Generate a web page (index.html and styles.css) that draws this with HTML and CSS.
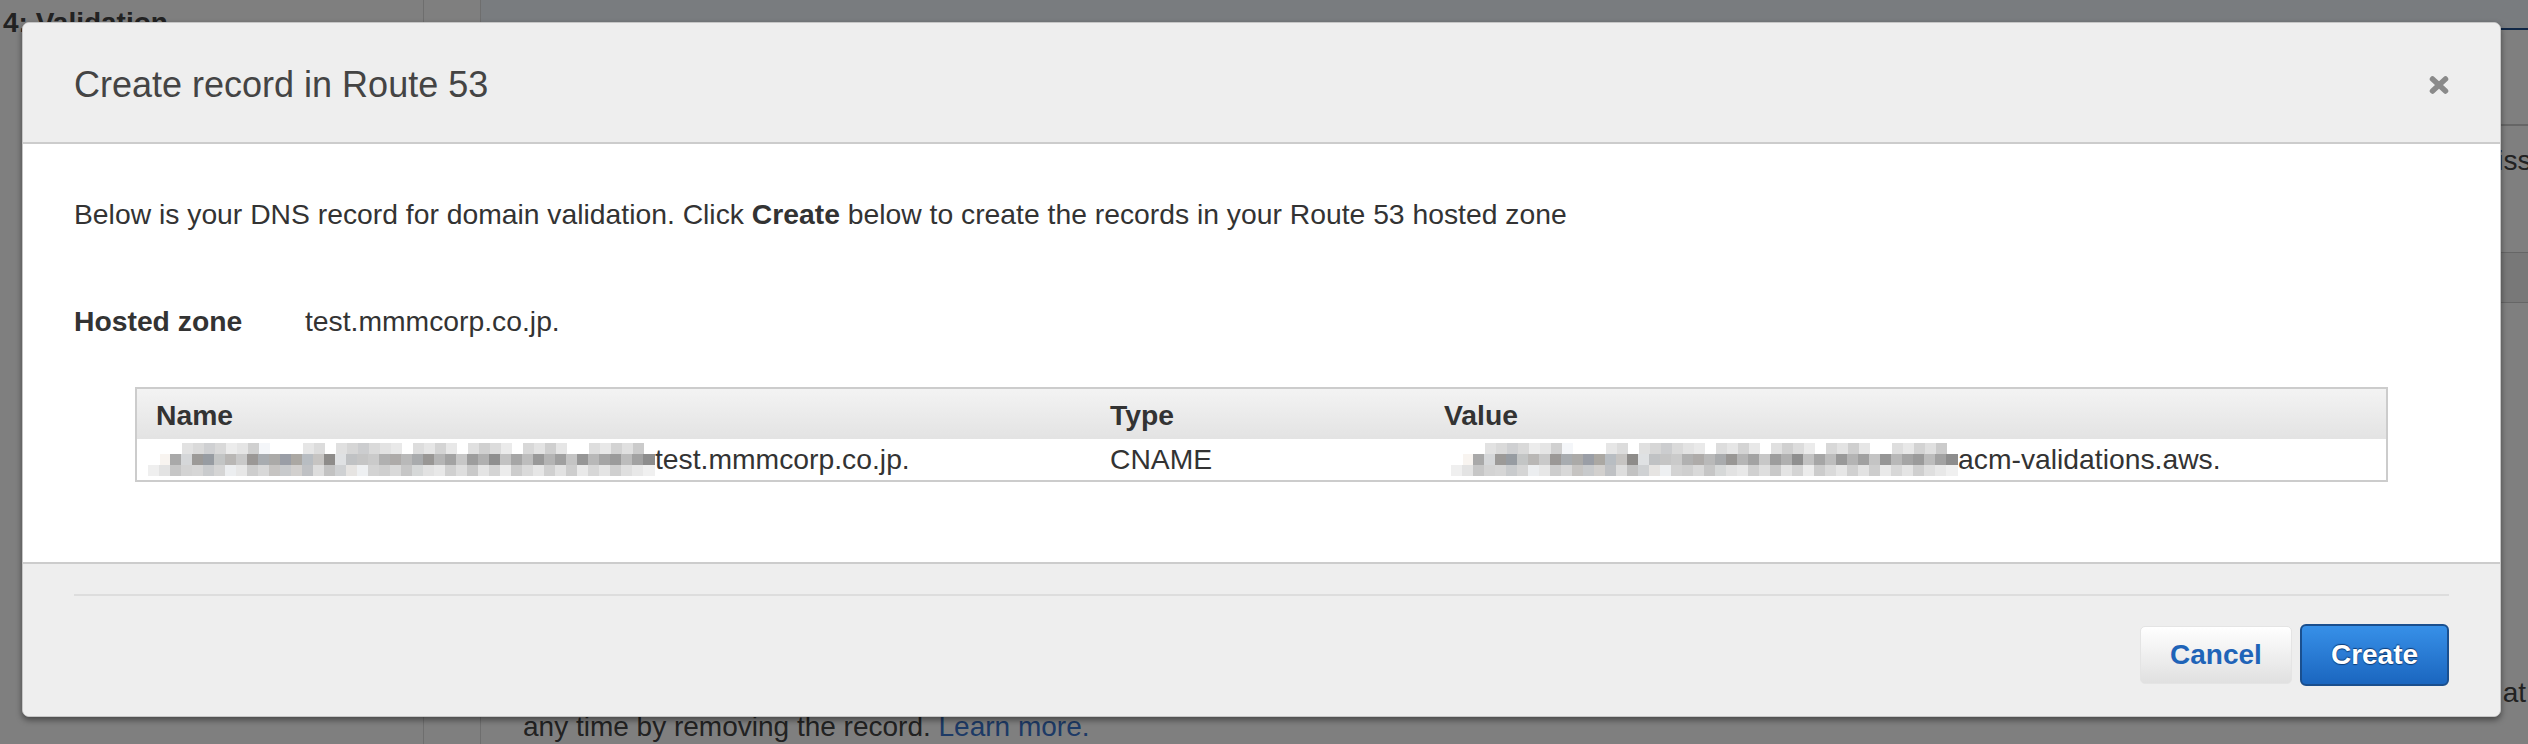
FILE: index.html
```html
<!DOCTYPE html>
<html lang="en">
<head>
<meta charset="utf-8">
<title>Create record in Route 53</title>
<link rel="stylesheet" href="styles.css">
</head>
<body>
<div class="page">
  <aside class="sidebar">
    <h2 class="step-title">4: Validation</h2>
  </aside>
  <div class="rail"></div>
  <main class="main">
    <div class="topbar"></div>
    <div class="bg-rule"></div>
    <p class="bg-line bg-issued">Once the record has been added and the domain is validated, the certificate is issued.</p>
    <div class="bg-band"></div>
    <p class="bg-note">
      <span class="note-l1">Changing the DNS configuration allows ACM to issue certificates for this domain name for as long as the DNS record exists. You can revoke permission at</span>
      <span class="note-l2">any time by removing the record. <a class="bg-link" href="#">Learn more.</a></span>
    </p>
  </main>
</div>
<div class="backdrop"></div>

<div class="modal" role="dialog" aria-labelledby="modal-title">
  <header class="modal-header">
    <h1 id="modal-title" class="modal-title">Create record in Route 53</h1>
    <button class="close-btn" aria-label="Close">
      <svg width="22" height="20" viewBox="0 0 22 20"><path d="M4.5 4 L17.5 16 M17.5 4 L4.5 16" stroke="#8a8a8a" stroke-width="5.5" stroke-linecap="round" fill="none"/></svg>
    </button>
  </header>
  <section class="modal-body">
    <p class="lead">Below is your DNS record for domain validation. Click <b>Create</b> below to create the records in your Route 53 hosted zone</p>
    <div class="zone-row">
      <span class="zone-label">Hosted zone</span>
      <span class="zone-value">test.mmmcorp.co.jp.</span>
    </div>
    <div class="record-table">
      <div class="th">Name</div>
      <div class="th">Type</div>
      <div class="th">Value</div>
      <div class="td"><span class="mosaic mosaic-name"><i class="m1"></i><i class="m2"></i><i class="m3"></i></span>test.mmmcorp.co.jp.</div>
      <div class="td">CNAME</div>
      <div class="td"><span class="mosaic mosaic-value"><i class="m1"></i><i class="m2"></i><i class="m3"></i></span>acm-validations.aws.</div>
    </div>
  </section>
  <footer class="modal-footer">
    <div class="footer-rule"></div>
    <div class="actions">
      <button class="btn btn-cancel">Cancel</button>
      <button class="btn btn-primary">Create</button>
    </div>
  </footer>
</div>
</body>
</html>
```

FILE: styles.css
```css
* { box-sizing: border-box; }
html, body {
  margin: 0;
  padding: 0;
  width: 2528px;
  height: 744px;
  overflow: hidden;
  background: #ffffff;
  font-family: "Liberation Sans", Arial, Helvetica, sans-serif;
  color: #444;
}

/* ---------- background page ---------- */
.page {
  display: flex;
  height: 744px;
  overflow: hidden;
}
.sidebar {
  width: 424px;
  flex: none;
  border-right: 1px solid #dddddd;
}
.step-title {
  margin: 6px 0 0 3px;
  font-size: 28px;
  line-height: 34px;
  font-weight: bold;
  color: #444;
}
.rail {
  width: 57px;
  flex: none;
  border-right: 1px solid #dddddd;
}
.main {
  flex: 1;
  min-width: 0;
  overflow: hidden;
  display: flex;
  flex-direction: column;
}
.topbar {
  height: 30px;
  flex: none;
  background: #f2f8ff;
  border-bottom: 2px solid #204f8c;
  border-left: 2px solid #204f8c;
  margin-left: -2px;
}
.bg-rule {
  margin-top: 94px;
  border-top: 2px solid #cccccc;
}
.bg-line {
  margin: 0;
  font-size: 28px;
  line-height: 34px;
  white-space: nowrap;
}
.bg-issued {
  margin-top: 18px;
  text-align: right;
  margin-right: -58px;
}
.bg-band {
  margin-top: 74px;
  height: 52px;
  background: #f0f0f0;
  border-top: 1px solid #cccccc;
  border-bottom: 1px solid #cccccc;
}
.bg-note {
  margin: 373px 0 0;
  font-size: 28px;
  line-height: 34px;
}
.note-l1 {
  display: block;
  text-align: right;
  white-space: nowrap;
  padding-right: 2px;
}
.note-l2 {
  display: block;
  padding-left: 42px;
  white-space: nowrap;
}
.bg-link {
  color: #3a74cc;
  text-decoration: none;
}
.backdrop {
  position: fixed;
  inset: 0;
  background: rgba(0, 0, 0, 0.5);
}

/* ---------- modal ---------- */
.modal {
  position: absolute;
  left: 22px;
  top: 22px;
  width: 2479px;
  height: 695px;
  display: flex;
  flex-direction: column;
  background: #eeeeee;
  border: 1px solid #c6c6c6;
  border-radius: 7px;
  box-shadow: 0 3px 6px rgba(0, 0, 0, 0.45);
  overflow: hidden;
}
.modal-header {
  height: 121px;
  flex: none;
  display: flex;
  align-items: center;
  justify-content: space-between;
  padding: 0 50px 0 51px;
  background: #eeeeee;
  border-bottom: 2px solid #cccccc;
}
.modal-title {
  margin: 0;
  padding-top: 4px;
  font-size: 36px;
  line-height: 40px;
  font-weight: normal;
  color: #444;
}
.close-btn {
  margin-top: 5px;
  padding: 0;
  border: 0;
  background: none;
  width: 22px;
  height: 20px;
  display: block;
}
.close-btn svg { display: block; }

.modal-body {
  height: 420px;
  flex: none;
  background: #ffffff;
  border-bottom: 2px solid #cccccc;
  padding: 0 51px;
  font-size: 28.3px;
  color: #333;
}
.lead {
  margin: 50px 0 0;
  line-height: 40px;
  white-space: nowrap;
}
.lead b { font-weight: bold; }
.zone-row {
  margin-top: 67px;
  display: grid;
  grid-template-columns: 231px 1fr;
  line-height: 40px;
}
.zone-label { font-weight: bold; }

.record-table {
  margin: 46px 61px 0;
  display: grid;
  grid-template-columns: 954px 334px 1fr;
  border: 2px solid #cccccc;
}
.th {
  height: 50px;
  padding: 2px 0 0 19px;
  line-height: 48px;
  font-weight: bold;
  color: #333;
  background: linear-gradient(#f3f3f3, #e3e3e3);
}
.td {
  height: 41px;
  padding-left: 19px;
  display: flex;
  align-items: center;
  white-space: nowrap;
  color: #333;
}

.mosaic {
  display: flex;
  flex-direction: column;
  flex: none;
  height: 33px;
}
.mosaic i { display: block; height: 11px; }
.mosaic-name { width: 507px; margin-left: -8px; }
.mosaic-value { width: 517px; margin-left: -3px; }
.mosaic-value i { background-position: 10px 0 !important; background-repeat: no-repeat !important; }
.mosaic .m1 {
  background: linear-gradient(90deg,
    transparent 0 34px, #e2e2e2 34px 45px, #dadada 45px 56px, #cfd0d2 56px 67px, #d9d9d9 67px 78px,
    #ececec 78px 89px, #e5e5e5 89px 100px, #d0d0d0 100px 111px, #f4f6f9 111px 122px, transparent 122px 155px,
    #e6e6e6 155px 166px, #dcdcdc 166px 177px, transparent 177px 188px, #e0e0e0 188px 199px, #d6d6d6 199px 210px,
    #cccdcf 210px 221px, #dadada 221px 232px, #e3e3e3 232px 243px, #e9e9e9 243px 254px, transparent 254px 265px,
    #dddddd 265px 276px, #e6e6e6 276px 287px, #d4d4d4 287px 298px, #e8e8e8 298px 309px, transparent 309px 320px,
    #e0e0e0 320px 331px, #d0d0d0 331px 342px, #dcdcdc 342px 353px, #ebebeb 353px 364px, transparent 364px 375px,
    #d8d8d8 375px 386px, #e3e3e3 386px 397px, #cfcfcf 397px 408px, #e6e6e6 408px 419px, transparent 419px 441px,
    #dedede 441px 452px, #e8e8e8 452px 463px, #d3d3d3 463px 474px, #e0e0e0 474px 485px, #cbcbcb 485px 496px,
    transparent 496px);
}
.mosaic .m2 {
  background: linear-gradient(90deg,
    transparent 0 12px, #f8f4f0 12px 22px, #a9a9a9 22px 33px, #d5d7d9 33px 44px, #9c9a98 44px 55px,
    #979ca2 55px 66px, #c3c5c5 66px 77px, #b9b7b5 77px 88px, #c9c9c9 88px 99px, #9b9896 99px 110px,
    #a8acb0 110px 121px, #abaaa8 121px 132px, #9a9ea6 132px 143px, #aba8a3 143px 154px, #b8bdc2 154px 165px,
    #c6c4c2 165px 176px, #8e8c8a 176px 187px, #dfe1e3 187px 198px, #c0c2c4 198px 209px, #c5c5c5 209px 220px,
    #cacaca 220px 231px, #b1b1b1 231px 242px, #aeaba9 242px 253px, #b9b9b9 253px 264px, #a9abad 264px 275px,
    #999795 275px 286px, #b5b5b5 286px 297px, #a3a3a3 297px 308px, #c7c7c7 308px 319px, #9d9d9d 319px 330px,
    #b0b0b0 330px 341px, #8f8f8f 341px 352px, #c2c2c2 352px 363px, #a6a6a6 363px 374px, #bdbdbd 374px 385px,
    #999999 385px 396px, #b4b4b4 396px 407px, #a0a0a0 407px 418px, #c4c4c4 418px 429px, #969696 429px 440px,
    #b8b8b8 440px 451px, #a5a5a5 451px 462px, #9b9b9b 462px 473px, #bcbcbc 473px 484px, #a2a2a2 484px 495px,
    #8d8d8d 495px);
}
.mosaic .m3 {
  background: linear-gradient(90deg,
    #efefef 0 11px, #e3e3e3 11px 22px, #c6c6c6 22px 33px, #d3d3d3 33px 44px, #d6d6d6 44px 55px,
    #c9cbcd 55px 66px, #d5d5d5 66px 77px, #eceef0 77px 88px, #e7e7e7 88px 99px, #cdcdcd 99px 110px,
    #d8d8d8 110px 121px, #c6c4c2 121px 132px, #c8cacc 132px 143px, #d2d0ce 143px 154px, #bfc1c4 154px 165px,
    #dddddd 165px 176px, #c2c2c2 176px 187px, #cfd1d3 187px 198px, #e6e4e2 198px 209px, #eef0f2 209px 220px,
    #d3d3d3 220px 231px, #cfcfcf 231px 242px, #d9d9d9 242px 253px, #c6c6c6 253px 264px, #d6d8d8 264px 275px,
    #e2e2e2 275px 286px, #e8e8e8 286px 297px, #d0d0d0 297px 308px, #dedede 308px 319px, #c9c9c9 319px 330px,
    #e4e4e4 330px 341px, #d4d4d4 341px 352px, #ececec 352px 363px, #cccccc 363px 374px, #dadada 374px 385px,
    #e6e6e6 385px 396px, #d0d0d0 396px 407px, #e2e2e2 407px 418px, #cdcdcd 418px 429px, #e9e9e9 429px 440px,
    #d7d7d7 440px 451px, #e4e4e4 451px 462px, #cfcfcf 462px 473px, #dfdfdf 473px 484px, #e8e8e8 484px 495px,
    #f0f0f0 495px);
}

.modal-footer {
  flex: 1;
  padding: 30px 51px 0;
  background: #eeeeee;
}
.footer-rule {
  height: 2px;
  background: #dddddd;
}
.actions {
  margin-top: 28px;
  display: flex;
  justify-content: flex-end;
  align-items: center;
  gap: 8px;
}
.btn {
  font-family: "Liberation Sans", Arial, Helvetica, sans-serif;
  font-size: 28px;
  font-weight: bold;
  cursor: pointer;
}
.btn-cancel {
  width: 152px;
  height: 58px;
  border: 1px solid #e4e4e4;
  border-radius: 5px;
  background: linear-gradient(#ffffff, #e0e0e0);
  color: #1f64b8;
}
.btn-primary {
  width: 149px;
  height: 62px;
  border: 2px solid #1a4f8e;
  border-radius: 6px;
  background: linear-gradient(#3790e8, #1b66bf);
  color: #ffffff;
  text-shadow: 0 -1px 1px #0e3d78, 0 1px 1px #0e3d78;
}
```
